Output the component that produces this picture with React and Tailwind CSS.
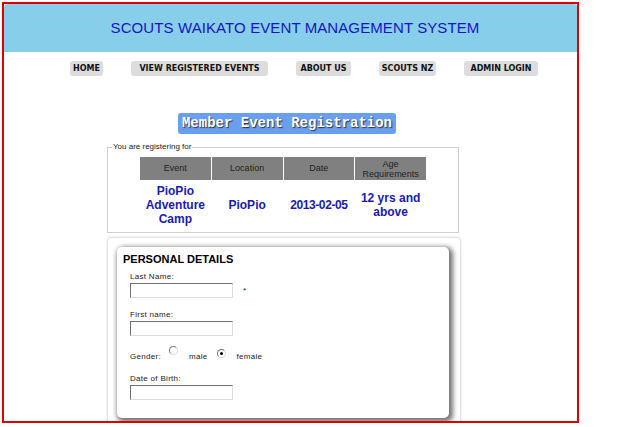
import { useState } from "react";

const navItems = [
  { label: "HOME", w: "w-[33px]" },
  { label: "VIEW REGISTERED EVENTS", w: "w-[137px]" },
  { label: "ABOUT US", w: "w-[55px]" },
  { label: "SCOUTS NZ", w: "w-[57px]" },
  { label: "ADMIN LOGIN", w: "w-[74px]" },
];

function TextBox() {
  return (
    <input
      type="text"
      className="block w-[103px] h-[15px] bg-white border border-t-[#707070] border-l-[#707070] border-b-[#dcdcdc] border-r-[#dcdcdc] outline-none"
    />
  );
}

function Radio({ checked }) {
  return (
    <span className="relative -top-[4px] inline-flex w-[9px] h-[9px] rounded-full border border-t-[#777] border-l-[#777] border-b-[#ddd] border-r-[#ddd] bg-white items-center justify-center">
      {checked && <span className="w-[3px] h-[3px] rounded-full bg-black" />}
    </span>
  );
}

function App() {
  const [gender, setGender] = useState("female");

  return (
    <div className="w-[629px] h-[427px] bg-white font-['Liberation_Sans',Arial,sans-serif]">
      <div className="absolute left-[2px] top-[2px] w-[577px] h-[421px] border-2 border-[#e00000] overflow-hidden">
        {/* Header */}
        <div className="h-[48px] bg-[#87ceeb] rounded-tl-[4px] rounded-tr-[3px] flex items-center justify-center pl-[9px]">
          <h1 className="text-[15px] text-[#1515c0] tracking-[0.1px]">
            SCOUTS WAIKATO EVENT MANAGEMENT SYSTEM
          </h1>
        </div>

        {/* Nav */}
        <div className="flex mt-[9px] ml-[66px] gap-[28px]">
          {navItems.map((item) => (
            <div
              key={item.label}
              className={`${item.w} h-[15px] bg-[#dddddd] rounded-[3px] flex items-center justify-center whitespace-nowrap font-['DejaVu_Sans',Verdana,sans-serif] font-bold text-[8px] text-[#111]`}
            >
              {item.label}
            </div>
          ))}
        </div>

        {/* Title */}
        <div className="mt-[37px] ml-[174px] w-[218px] h-[21px] rounded-[3px] bg-[#6a9ff0] flex items-center justify-center">
          <span className="font-['Liberation_Mono','Courier_New',monospace] font-bold text-[14px] text-white [text-shadow:1px_1px_1px_#333]">
            Member Event Registration
          </span>
        </div>

        {/* Event fieldset */}
        <fieldset className="mt-[7px] ml-[103px] w-[352px] h-[92px] border border-[#cfcfcf] px-0 pt-[4px]">
          <legend className="ml-[4px] px-[1px] text-[8px] text-[#222]">
            You are registering for
          </legend>
          <div className="mx-auto w-[286px]">
            <div className="grid grid-cols-4 gap-[1px]">
              <div className="h-[23px] bg-[#808080] flex items-center justify-center text-[9px] text-[#222]">
                Event
              </div>
              <div className="h-[23px] bg-[#808080] flex items-center justify-center text-[9px] text-[#222]">
                Location
              </div>
              <div className="h-[23px] bg-[#808080] flex items-center justify-center text-[9px] text-[#222]">
                Date
              </div>
              <div className="h-[23px] bg-[#808080] flex flex-col items-center justify-center text-[9px] leading-[10px] text-[#222]">
                <span>Age</span>
                <span>Requirements</span>
              </div>
            </div>
            <div className="grid grid-cols-4 gap-[1px] mt-[4px] text-[12px] font-bold text-[#1a1ab0] leading-[14px] text-center">
              <div>
                PioPio
                <br />
                Adventure
                <br />
                Camp
              </div>
              <div className="flex items-center justify-center">PioPio</div>
              <div className="flex items-center justify-center tracking-[-0.4px]">2013-02-05</div>
              <div className="flex items-center justify-center">
                12 yrs and
                <br />
                above
              </div>
            </div>
          </div>
        </fieldset>

        {/* Personal details */}
        <div className="mt-[4px] ml-[103px] w-[354px] h-[200px] border border-[#e2e2e2] rounded-t-[4px] shadow-[0_0_3px_rgba(0,0,0,0.12)] pt-[9px] pl-[9px]">
          <div className="w-[332px] h-[171px] bg-white rounded-[5px] shadow-[2px_2px_5px_2px_rgba(0,0,0,0.55)] pt-[5px] pl-[6px]">
            <h2 className="text-[11px] font-bold text-black leading-[14px]">
              PERSONAL DETAILS
            </h2>
            <div className="pl-[7px] text-[8px] text-[#222] tracking-[0.3px]">
              <div className="mt-[6px] leading-[10px]">Last Name:</div>
              <div className="flex items-center mt-[1px]">
                <TextBox />
                <span className="ml-[10px] text-[8px]">*</span>
              </div>

              <div className="mt-[12px] leading-[10px]">First name:</div>
              <div className="mt-[1px]">
                <TextBox />
              </div>

              <div className="mt-[14px] flex items-end h-[12px] leading-[10px]">
                <span>Gender:</span>
                <span className="ml-[8px]" onClick={() => setGender("male")}>
                  <Radio checked={gender === "male"} />
                </span>
                <span className="ml-[11px]">male</span>
                <span className="ml-[9px]" onClick={() => setGender("female")}>
                  <Radio checked={gender === "female"} />
                </span>
                <span className="ml-[11px]">female</span>
              </div>

              <div className="mt-[12px] leading-[10px]">Date of Birth:</div>
              <div className="mt-[1px]">
                <TextBox />
              </div>
            </div>
          </div>
        </div>
      </div>
    </div>
  );
}

export default App;
